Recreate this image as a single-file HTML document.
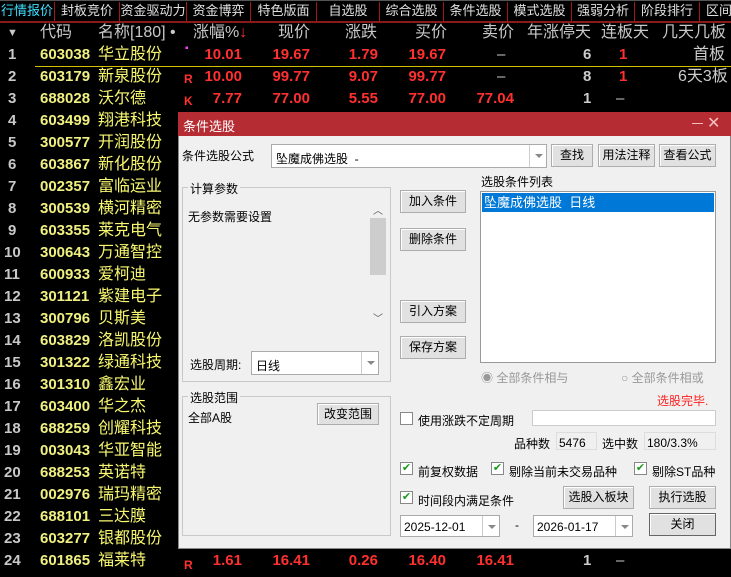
<!DOCTYPE html>
<html><head><meta charset="utf-8"><style>
*{margin:0;padding:0;box-sizing:border-box}
body{width:731px;height:577px;background:#000;overflow:hidden;position:relative;font-family:"Liberation Sans","Noto Sans CJK SC",sans-serif}
.a{position:absolute;white-space:nowrap}
.tab{position:absolute;top:0;height:22px;line-height:22px;font-size:13px;color:#e0e0e0;text-align:center;white-space:nowrap;overflow:hidden}
.sep{position:absolute;top:2px;width:1px;height:19px;background:#a01818}
.h{position:absolute;top:22px;font-size:16px;color:#c8c8c8;line-height:22px;white-space:nowrap}
.r{position:absolute;height:22px;line-height:22px;font-size:15px;left:0;width:731px;white-space:nowrap}
.n{position:absolute;color:#c8c8c8;font-weight:bold}
.c{position:absolute;left:40px;color:#f0f080;font-weight:bold}
.m{position:absolute;left:98px;color:#f8f870;font-size:16px}
.red{position:absolute;color:#ff3030;font-weight:bold;text-align:right}
.d{position:absolute;background:#f0f0f0;font-size:12px;color:#000;line-height:1}
.btn{position:absolute;background:#e1e1e1;border:1px solid #adadad;font-size:12px;text-align:center;box-shadow:inset 1px 1px #fff;white-space:nowrap}
.box{position:absolute;background:#fff;border:1px solid #7a7a7a}
.grp{position:absolute;border:1px solid #c8c8c8}
.gl{position:absolute;background:#f0f0f0;padding:0 2px;font-size:12px}
.cb{position:absolute;width:13px;height:13px;border:1px solid #888;background:#fff}
.dd{position:absolute;right:0;top:0;bottom:0;width:17px;border-left:1px solid #ccc}
.dd:after{content:"";position:absolute;left:5px;top:9px;border:4px solid transparent;border-top:4px solid #888}
</style></head><body>
<div class="a" style="left:0;top:0;width:731px;height:1px;background:#555"></div>
<div class="tab" style="left:0;width:54px;color:#40e0ff">行情报价</div>
<div class="tab" style="left:55px;width:64px">封板竞价</div>
<div class="tab" style="left:120px;width:66px">资金驱动力</div>
<div class="tab" style="left:187px;width:63px">资金博弈</div>
<div class="tab" style="left:251px;width:65px">特色版面</div>
<div class="tab" style="left:317px;width:62px">自选股</div>
<div class="tab" style="left:380px;width:63px">综合选股</div>
<div class="tab" style="left:444px;width:63px">条件选股</div>
<div class="tab" style="left:508px;width:63px">模式选股</div>
<div class="tab" style="left:572px;width:62px">强弱分析</div>
<div class="tab" style="left:635px;width:64px">阶段排行</div>
<div class="tab" style="left:700px;width:40px;text-align:left;padding-left:6px">区间</div>
<div class="sep" style="left:54px"></div><div class="sep" style="left:119px"></div><div class="sep" style="left:186px"></div><div class="sep" style="left:250px"></div><div class="sep" style="left:316px"></div><div class="sep" style="left:379px"></div><div class="sep" style="left:443px"></div><div class="sep" style="left:507px"></div><div class="sep" style="left:571px"></div><div class="sep" style="left:634px"></div><div class="sep" style="left:699px"></div>
<div class="a" style="left:0;top:21px;width:731px;height:2px;background:#8a1a1a"></div>
<div class="h" style="left:7px;font-size:11px">▼</div>
<div class="h" style="left:40px">代码</div>
<div class="h" style="left:98px">名称[180] •</div>
<div class="h" style="left:193px">涨幅%<span style="color:#ff3030">↓</span></div>
<div class="h" style="left:278px">现价</div>
<div class="h" style="left:345px">涨跌</div>
<div class="h" style="left:415px">买价</div>
<div class="h" style="left:482px">卖价</div>
<div class="h" style="left:527px">年涨停天</div>
<div class="h" style="left:601px">连板天</div>
<div class="h" style="left:662px">几天几板</div>
<div class="r" style="top:44px"><span class="n" style="left:8px">1</span><span class="c">603038</span><span class="m">华立股份</span><span class="a" style="left:185px;top:-6px;color:#ff40ff;font-size:10px">▪</span><span class="red" style="left:190px;width:52px">10.01</span><span class="red" style="left:260px;width:50px">19.67</span><span class="red" style="left:330px;width:48px">1.79</span><span class="red" style="left:396px;width:50px">19.67</span><span class="a" style="left:497px;color:#ccc">–</span><span class="a" style="left:583px;color:#ccc;font-weight:bold">6</span><span class="a" style="left:619px;color:#ff3030;font-weight:bold">1</span><span class="a" style="left:693px;color:#ccc;font-size:16px">首板</span></div>
<div class="a" style="left:35px;top:66px;width:696px;height:1px;background:#d0c000"></div>
<div class="r" style="top:66px"><span class="n" style="left:8px">2</span><span class="c">603179</span><span class="m">新泉股份</span><span class="a" style="left:184px;top:2px;color:#ff3030;font-size:12px;font-weight:bold">R</span><span class="red" style="left:190px;width:52px">10.00</span><span class="red" style="left:260px;width:50px">99.77</span><span class="red" style="left:330px;width:48px">9.07</span><span class="red" style="left:396px;width:50px">99.77</span><span class="a" style="left:497px;color:#ccc">–</span><span class="a" style="left:583px;color:#ccc;font-weight:bold">8</span><span class="a" style="left:619px;color:#ff3030;font-weight:bold">1</span><span class="a" style="left:678px;color:#ccc;font-size:16px">6天3板</span></div>
<div class="r" style="top:88px"><span class="n" style="left:8px">3</span><span class="c">688028</span><span class="m">沃尔德</span><span class="a" style="left:184px;top:2px;color:#ff3030;font-size:12px;font-weight:bold">K</span><span class="red" style="left:190px;width:52px">7.77</span><span class="red" style="left:260px;width:50px">77.00</span><span class="red" style="left:330px;width:48px">5.55</span><span class="red" style="left:396px;width:50px">77.00</span><span class="red" style="left:462px;width:52px">77.04</span><span class="a" style="left:583px;color:#ccc;font-weight:bold">1</span><span class="a" style="left:616px;color:#ccc">–</span></div>
<div class="r" style="top:110px"><span class="n" style="left:8px">4</span><span class="c">603499</span><span class="m">翔港科技</span></div>
<div class="r" style="top:132px"><span class="n" style="left:8px">5</span><span class="c">300577</span><span class="m">开润股份</span></div>
<div class="r" style="top:154px"><span class="n" style="left:8px">6</span><span class="c">603867</span><span class="m">新化股份</span></div>
<div class="r" style="top:176px"><span class="n" style="left:8px">7</span><span class="c">002357</span><span class="m">富临运业</span></div>
<div class="r" style="top:198px"><span class="n" style="left:8px">8</span><span class="c">300539</span><span class="m">横河精密</span></div>
<div class="r" style="top:220px"><span class="n" style="left:8px">9</span><span class="c">603355</span><span class="m">莱克电气</span></div>
<div class="r" style="top:242px"><span class="n" style="left:4px">10</span><span class="c">300643</span><span class="m">万通智控</span></div>
<div class="r" style="top:264px"><span class="n" style="left:4px">11</span><span class="c">600933</span><span class="m">爱柯迪</span></div>
<div class="r" style="top:286px"><span class="n" style="left:4px">12</span><span class="c">301121</span><span class="m">紫建电子</span></div>
<div class="r" style="top:308px"><span class="n" style="left:4px">13</span><span class="c">300796</span><span class="m">贝斯美</span></div>
<div class="r" style="top:330px"><span class="n" style="left:4px">14</span><span class="c">603829</span><span class="m">洛凯股份</span></div>
<div class="r" style="top:352px"><span class="n" style="left:4px">15</span><span class="c">301322</span><span class="m">绿通科技</span></div>
<div class="r" style="top:374px"><span class="n" style="left:4px">16</span><span class="c">301310</span><span class="m">鑫宏业</span></div>
<div class="r" style="top:396px"><span class="n" style="left:4px">17</span><span class="c">603400</span><span class="m">华之杰</span></div>
<div class="r" style="top:418px"><span class="n" style="left:4px">18</span><span class="c">688259</span><span class="m">创耀科技</span></div>
<div class="r" style="top:440px"><span class="n" style="left:4px">19</span><span class="c">003043</span><span class="m">华亚智能</span></div>
<div class="r" style="top:462px"><span class="n" style="left:4px">20</span><span class="c">688253</span><span class="m">英诺特</span></div>
<div class="r" style="top:484px"><span class="n" style="left:4px">21</span><span class="c">002976</span><span class="m">瑞玛精密</span></div>
<div class="r" style="top:506px"><span class="n" style="left:4px">22</span><span class="c">688101</span><span class="m">三达膜</span></div>
<div class="r" style="top:528px"><span class="n" style="left:4px">23</span><span class="c">603277</span><span class="m">银都股份</span></div>
<div class="r" style="top:550px"><span class="n" style="left:4px">24</span><span class="c">601865</span><span class="m">福莱特</span><span class="a" style="left:184px;top:4px;color:#ff3030;font-size:12px;font-weight:bold">R</span><span class="red" style="left:190px;width:52px">1.61</span><span class="red" style="left:260px;width:50px">16.41</span><span class="red" style="left:330px;width:48px">0.26</span><span class="red" style="left:396px;width:50px">16.40</span><span class="red" style="left:462px;width:52px">16.41</span><span class="a" style="left:583px;color:#ccc;font-weight:bold">1</span><span class="a" style="left:616px;color:#ccc">–</span></div>

<div class="a" style="left:178px;top:112px;width:553px;height:437px;background:#f0f0f0;border:1px solid #888"></div>
<div class="a" style="left:178px;top:112px;width:553px;height:24px;background:#b52d33"></div>
<div class="a" style="left:183px;top:116px;color:#fff;font-size:13px">条件选股</div>
<div class="a" style="left:692px;top:123px;width:11px;height:1px;background:#f0c0c0"></div>
<div class="a" style="left:707px;top:113px;color:#f0c0c0;font-size:16px">✕</div>

<div class="d a" style="left:182px;top:150px">条件选股公式</div>
<div class="box" style="left:271px;top:144px;width:276px;height:24px;border-color:#aaa"><span class="a" style="left:4px;top:5px;font-size:12px">坠魔成佛选股&nbsp; -</span><div class="dd"></div></div>
<div class="btn" style="left:551px;top:144px;width:42px;height:23px;line-height:21px">查找</div>
<div class="btn" style="left:598px;top:144px;width:57px;height:23px;line-height:21px">用法注释</div>
<div class="btn" style="left:659px;top:144px;width:57px;height:23px;line-height:21px">查看公式</div>

<div class="grp" style="left:182px;top:187px;width:209px;height:195px"></div>
<div class="gl a" style="left:188px;top:180px">计算参数</div>
<div class="a" style="left:188px;top:208px;font-size:12px">无参数需要设置</div>
<div class="a" style="left:370px;top:201px;width:16px;height:126px;background:#f0f0f0"></div>
<div class="a" style="left:370px;top:218px;width:16px;height:57px;background:#cdcdcd"></div>
<div class="a" style="left:373px;top:202px;font-size:10px;color:#555">︿</div>
<div class="a" style="left:373px;top:310px;font-size:10px;color:#555">﹀</div>
<div class="a" style="left:190px;top:356px;font-size:12px">选股周期:</div>
<div class="box" style="left:251px;top:351px;width:128px;height:24px;border-color:#aaa"><span class="a" style="left:4px;top:5px;font-size:12px">日线</span><div class="dd"></div></div>

<div class="btn" style="left:400px;top:190px;width:66px;height:23px;line-height:21px">加入条件</div>
<div class="btn" style="left:400px;top:228px;width:66px;height:23px;line-height:21px">删除条件</div>
<div class="btn" style="left:400px;top:300px;width:66px;height:23px;line-height:21px">引入方案</div>
<div class="btn" style="left:400px;top:336px;width:66px;height:23px;line-height:21px">保存方案</div>

<div class="a" style="left:481px;top:173px;font-size:12px">选股条件列表</div>
<div class="box" style="left:480px;top:191px;width:236px;height:172px;border-color:#999"></div>
<div class="a" style="left:482px;top:193px;width:232px;height:19px;background:#0078d7;color:#fff;font-size:13px;line-height:19px;padding-left:2px">坠魔成佛选股&nbsp; 日线</div>
<div class="a" style="left:481px;top:369px;font-size:12px;color:#999">◉ 全部条件相与</div>
<div class="a" style="left:621px;top:369px;font-size:12px;color:#999">○ 全部条件相或</div>

<div class="grp" style="left:182px;top:396px;width:209px;height:140px"></div>
<div class="gl a" style="left:188px;top:389px">选股范围</div>
<div class="a" style="left:188px;top:409px;font-size:12px">全部A股</div>
<div class="btn" style="left:317px;top:403px;width:62px;height:22px;line-height:20px">改变范围</div>

<div class="a" style="left:657px;top:392px;font-size:12px;color:#ff2020">选股完毕.</div>
<div class="cb" style="left:400px;top:412px"></div>
<div class="a" style="left:418px;top:412px;font-size:12px">使用涨跌不定周期</div>
<div class="box" style="left:532px;top:410px;width:184px;height:16px;border-color:#ccc"></div>
<div class="a" style="left:514px;top:435px;font-size:12px">品种数</div>
<div class="a" style="left:556px;top:432px;width:41px;height:18px;border:1px solid #ddd;font-size:12px;padding:3px 2px">5476</div>
<div class="a" style="left:602px;top:435px;font-size:12px">选中数</div>
<div class="a" style="left:644px;top:432px;width:72px;height:18px;border:1px solid #ddd;font-size:12px;padding:3px 2px">180/3.3%</div>

<div class="cb" style="left:400px;top:462px;color:#1a9a1a;font-size:11px;line-height:11px;text-align:center">✔</div>
<div class="a" style="left:418px;top:463px;font-size:12px">前复权数据</div>
<div class="cb" style="left:491px;top:462px;color:#1a9a1a;font-size:11px;line-height:11px;text-align:center">✔</div>
<div class="a" style="left:509px;top:463px;font-size:12px">剔除当前未交易品种</div>
<div class="cb" style="left:634px;top:462px;color:#1a9a1a;font-size:11px;line-height:11px;text-align:center">✔</div>
<div class="a" style="left:652px;top:463px;font-size:12px">剔除ST品种</div>
<div class="cb" style="left:400px;top:491px;color:#1a9a1a;font-size:11px;line-height:11px;text-align:center">✔</div>
<div class="a" style="left:418px;top:492px;font-size:12px">时间段内满足条件</div>
<div class="btn" style="left:563px;top:486px;width:71px;height:23px;line-height:21px">选股入板块</div>
<div class="btn" style="left:649px;top:486px;width:67px;height:23px;line-height:21px">执行选股</div>

<div class="box" style="left:400px;top:515px;width:100px;height:22px;border-color:#aaa"><span class="a" style="left:3px;top:4px;font-size:12px">2025-12-01</span><div class="dd"></div></div>
<div class="a" style="left:515px;top:518px;font-size:12px">-</div>
<div class="box" style="left:533px;top:515px;width:100px;height:22px;border-color:#aaa"><span class="a" style="left:3px;top:4px;font-size:12px">2026-01-17</span><div class="dd"></div></div>
<div class="btn" style="left:649px;top:513px;width:67px;height:23px;line-height:21px;border-color:#666">关闭</div>
</body></html>
